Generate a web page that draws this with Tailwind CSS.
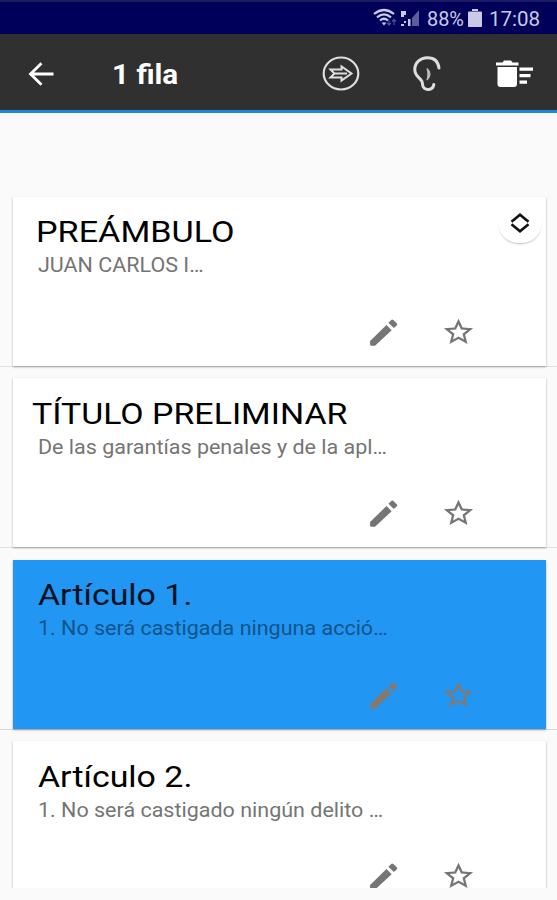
<!DOCTYPE html>
<html lang="es">
<head>
  <meta charset="UTF-8">
  <meta name="viewport" content="width=device-width, initial-scale=1.0">
  <title>1 fila</title>
  <script src="https://cdn.jsdelivr.net/npm/@tailwindcss/browser@4"></script>
</head>
<body class="bg-[#fafafa] font-[Roboto,sans-serif] w-[557px] h-[900px] overflow-hidden">
  <svg class="hidden">
    <symbol id="pencil" viewBox="0 0 24 24" preserveAspectRatio="none">
      <path d="M3.3 17.8v2.500q0 .7.7.7h2.500L17.300 10.400l-3.400-3.500zM20.700 7a1 1 0 0 0 0-1.200l-2.300-2.400a1 1 0 0 0-1.400 0l-1.800 1.900 3.500 3.600z"/>
    </symbol>
    <symbol id="star" viewBox="0 0 24 24" preserveAspectRatio="none">
      <path d="M22 9.24l-7.19-.62L12 2 9.19 8.63 2 9.24l5.46 4.73L5.82 21 12 17.27 18.18 21l-1.63-7.03L22 9.24zM12 15.4l-3.76 2.27 1-4.28-3.32-2.88 4.38-.38L12 6.1l1.71 4.04 4.38.38-3.32 2.88 1 4.28L12 15.4z"/>
    </symbol>
  </svg>

  <!-- Barra de estado -->
  <div class="h-[34px] bg-[#00005a] border-t-2 border-[#1c1c62] flex justify-end items-center pr-[17px] text-[#c9c9e6]">
    <svg class="w-[25px] h-[20px] mr-0.5" viewBox="0 0 25 20" fill="none" stroke="currentColor" stroke-width="2.200">
      <path d="M1 6Q11 -2 21 6M4 9.300Q11 3.500 18 9.300M7 12.500Q11 9 15 12.500"/>
      <path d="M11 17.500l-2.500-3h5z" fill="currentColor" stroke="none"/>
      <path d="M16 12v5M14 15l2 2 2-2M21 17v-5M19 13.500l2-2 2 2" stroke="#4b4b96" stroke-width="1.300"/>
    </svg>
    <svg class="w-[20px] h-[18px] mr-[7px]" viewBox="0 0 20 18">
      <path d="M19 1v16h-7V9z" fill="#5c5c9e"/>
      <path d="M1 2h5v4H4v2H1zM8 10h2.500v7H8zM1 15h3v2H1zM4 12h2v2H4z" fill="currentColor"/>
    </svg>
    <span class="w-[37px] mr-1 text-[20.500px] leading-[30px] relative top-px whitespace-nowrap"><span class="inline-block origin-left scale-x-[0.97]">88%</span></span>
    <svg class="w-[14px] h-[18px] mr-[7px]" viewBox="0 0 14 18" fill="currentColor">
      <path d="M4 0h6v2H4zM1 2.500h12a1 1 0 0 1 1 1V17a1 1 0 0 1-1 1H1a1 1 0 0 1-1-1V3.500a1 1 0 0 1 1-1z"/>
    </svg>
    <span class="w-[51px] text-[20.500px] leading-[30px] relative top-px whitespace-nowrap">17:08</span>
  </div>

  <!-- Barra de acciones -->
  <header class="h-[79px] bg-[#303030] border-b-3 border-[#2088d8] flex items-center pl-[28px] pr-[23px] text-white">
    <svg class="w-[26px] h-[24px] mr-[58px] mt-[3px]" viewBox="0 0 26 24" fill="none" stroke="currentColor" stroke-width="2.800">
      <path d="M25.500 12H3M13.500 1.200L2.500 12l11 10.800"/>
    </svg>
    <h1 class="w-[66px] text-[28px] font-bold leading-[40px] relative top-[3px] whitespace-nowrap"><span class="inline-block origin-left scale-x-[1.06]">1 fila</span></h1>
    <div class="ml-auto mt-1 flex items-center">
      <svg class="w-[38px] h-[36px] mr-[53px]" viewBox="0 0 38 36" fill="none" stroke="#dedede" stroke-width="2.200">
        <ellipse cx="19" cy="17.500" rx="17.300" ry="16"/>
        <path d="M8.500 13.500h11v-3l10 7-10 7v-3h-11l4-4zM13 17.500h12" stroke-width="2"/>
      </svg>
      <svg class="w-[28px] h-[36px] mr-[54px]" viewBox="0 0 28 36" fill="none" stroke="#dedede" stroke-width="3" stroke-linecap="round">
        <path d="M26 12C25 5 20.500 1.800 14.500 1.800C7 1.800 1.800 7 1.800 13.500C1.800 22 9.500 21.500 9.500 28C9.500 32 12.500 34 16 33.500C19 33 20.500 31 20.800 28.500"/>
        <path d="M14 12.500Q20 18 14 24Q16 18 14 12.500z" fill="#bdbdbd" stroke="#bdbdbd" stroke-width="1.200"/>
      </svg>
      <svg class="w-[39px] h-[28px]" viewBox="0 0 39 28" fill="currentColor">
        <path d="M1 2.500h6.500L9 .5h7l1.500 2h6V5.500H1zM2.500 7H22v17q0 3-3 3H5.500q-3 0-3-3zM24.500 7.500h13.500v3.200H24.500zM24.500 14h11v3.200h-11zM24.500 20.500h7.500v3.200h-7.500z"/>
      </svg>
    </div>
  </header>

  <!-- Lista de artículos -->
  <main class="relative mt-[72px] h-[703px] overflow-hidden">
    <section class="h-[181.500px] pt-[11.500px] pl-[12.500px] pr-[11px] border-b border-[#e0e0e0]">
      <article class="h-[169px] bg-white shadow-[0_1px_2px_rgba(0,0,0,0.320)] pl-[25.500px] pt-[17.500px]">
        <h2 class="h-[35px] text-[30px] leading-[35px] text-black whitespace-nowrap"><span class="inline-block origin-left scale-x-[1.14] -ml-0.5">PREÁMBULO</span></h2>
        <p class="h-[24px] mt-1 text-[20px] leading-[24px] text-[#757575] whitespace-nowrap"><span class="inline-block origin-left scale-x-[1.075]">JUAN CARLOS I…</span></p>
        <div class="flex mt-[37.500px] ml-[327px] text-[#757575]">
          <svg class="w-[37px] h-[35px] mr-[39px]" fill="currentColor"><use href="#pencil"/></svg>
          <svg class="w-[35px] h-[32px] mt-px" fill="currentColor"><use href="#star"/></svg>
        </div>
      </article>
    </section>
    <section class="h-[181.500px] pt-[11.500px] pl-[12.500px] pr-[11px] border-b border-[#e0e0e0]">
      <article class="h-[169px] bg-white shadow-[0_1px_2px_rgba(0,0,0,0.320)] pl-[25.500px] pt-[17.500px]">
        <h2 class="h-[35px] text-[30px] leading-[35px] text-black whitespace-nowrap"><span class="inline-block origin-left scale-x-[1.13] -ml-1.5">TÍTULO PRELIMINAR</span></h2>
        <p class="h-[24px] mt-1 text-[20px] leading-[24px] text-[#757575] whitespace-nowrap"><span class="inline-block origin-left scale-x-[1.075]">De las garantías penales y de la apl…</span></p>
        <div class="flex mt-[37.500px] ml-[327px] text-[#757575]">
          <svg class="w-[37px] h-[35px] mr-[39px]" fill="currentColor"><use href="#pencil"/></svg>
          <svg class="w-[35px] h-[32px] mt-px" fill="currentColor"><use href="#star"/></svg>
        </div>
      </article>
    </section>
    <section class="h-[181.500px] pt-[11.500px] pl-[12.500px] pr-[11px] border-b border-[#d6d6d6]">
      <article class="h-[169px] bg-[#2196f3] shadow-[0_1px_2px_rgba(0,0,0,0.320)] pl-[25.500px] pt-[17.500px]">
        <h2 class="h-[35px] text-[30px] leading-[35px] text-[#00101c] whitespace-nowrap"><span class="inline-block origin-left scale-x-[1.13]">Artículo 1.</span></h2>
        <p class="h-[24px] mt-1 text-[20px] leading-[24px] text-[#12548a] whitespace-nowrap"><span class="inline-block origin-left scale-x-[1.075]">1. No será castigada ninguna acció…</span></p>
        <div class="flex mt-[37.500px] ml-[327px] text-[#85786f]">
          <svg class="w-[37px] h-[35px] mr-[39px]" fill="currentColor"><use href="#pencil"/></svg>
          <svg class="w-[35px] h-[32px] mt-px" fill="currentColor"><use href="#star"/></svg>
        </div>
      </article>
    </section>
    <section class="h-[181.500px] pt-[11.500px] pl-[12.500px] pr-[11px]">
      <article class="h-[169px] bg-white shadow-[0_1px_2px_rgba(0,0,0,0.320)] pl-[25.500px] pt-[17.500px]">
        <h2 class="h-[35px] text-[30px] leading-[35px] text-black whitespace-nowrap"><span class="inline-block origin-left scale-x-[1.13]">Artículo 2.</span></h2>
        <p class="h-[24px] mt-1 text-[20px] leading-[24px] text-[#757575] whitespace-nowrap"><span class="inline-block origin-left scale-x-[1.075]">1. No será castigado ningún delito …</span></p>
        <div class="flex mt-[37.500px] ml-[327px] text-[#757575]">
          <svg class="w-[37px] h-[35px] mr-[39px]" fill="currentColor"><use href="#pencil"/></svg>
          <svg class="w-[35px] h-[32px] mt-px" fill="currentColor"><use href="#star"/></svg>
        </div>
      </article>
    </section>

    <!-- Botón flotante -->
    <button class="absolute top-[17px] right-[15px] w-[44px] h-[41px] rounded-full bg-white shadow-[0_2px_2px_-1px_rgba(0,0,0,0.250)] flex items-center justify-center">
      <svg class="w-[20px] h-[20px]" viewBox="0 0 20 20" fill="none" stroke="#111" stroke-width="2.600">
        <path d="M1.500 8.800L10 1.800l8.500 7M1.500 11.200l8.500 7 8.500-7"/>
      </svg>
    </button>
  </main>
</body>
</html>
